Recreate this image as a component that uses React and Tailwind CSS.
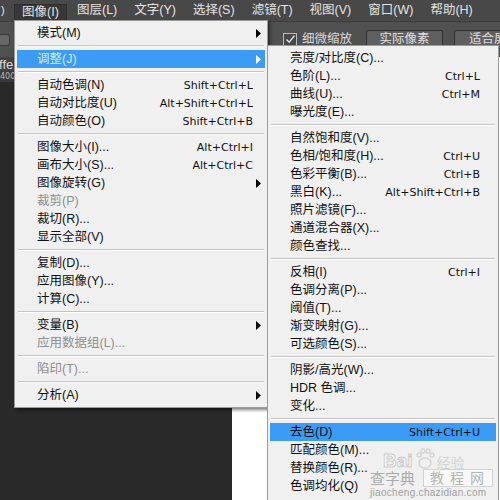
import React from 'react'

const UI = "font-['Liberation_Sans','Noto_Sans_CJK_SC',sans-serif]"

const MENUBAR = ['图层(L)', '文字(Y)', '选择(S)', '滤镜(T)', '视图(V)', '窗口(W)', '帮助(H)']

const IMAGE_MENU = [
  { label: '模式(M)', arrow: true },
  { sep: true },
  { label: '调整(J)', arrow: true, active: true },
  { sep: true },
  { label: '自动色调(N)', key: 'Shift+Ctrl+L' },
  { label: '自动对比度(U)', key: 'Alt+Shift+Ctrl+L' },
  { label: '自动颜色(O)', key: 'Shift+Ctrl+B' },
  { sep: true },
  { label: '图像大小(I)...', key: 'Alt+Ctrl+I' },
  { label: '画布大小(S)...', key: 'Alt+Ctrl+C' },
  { label: '图像旋转(G)', arrow: true },
  { label: '裁剪(P)', off: true },
  { label: '裁切(R)...' },
  { label: '显示全部(V)' },
  { sep: true },
  { label: '复制(D)...' },
  { label: '应用图像(Y)...' },
  { label: '计算(C)...' },
  { sep: true },
  { label: '变量(B)', arrow: true },
  { label: '应用数据组(L)...', off: true },
  { sep: true },
  { label: '陷印(T)...', off: true },
  { sep: true },
  { label: '分析(A)', arrow: true },
]

const ADJUST_MENU = [
  { label: '亮度/对比度(C)...' },
  { label: '色阶(L)...', key: 'Ctrl+L' },
  { label: '曲线(U)...', key: 'Ctrl+M' },
  { label: '曝光度(E)...' },
  { sep: true },
  { label: '自然饱和度(V)...' },
  { label: '色相/饱和度(H)...', key: 'Ctrl+U' },
  { label: '色彩平衡(B)...', key: 'Ctrl+B' },
  { label: '黑白(K)...', key: 'Alt+Shift+Ctrl+B' },
  { label: '照片滤镜(F)...' },
  { label: '通道混合器(X)...' },
  { label: '颜色查找...' },
  { sep: true },
  { label: '反相(I)', key: 'Ctrl+I' },
  { label: '色调分离(P)...' },
  { label: '阈值(T)...' },
  { label: '渐变映射(G)...' },
  { label: '可选颜色(S)...' },
  { sep: true },
  { label: '阴影/高光(W)...' },
  { label: 'HDR 色调...' },
  { label: '变化...' },
  { sep: true },
  { label: '去色(D)', key: 'Shift+Ctrl+U', active: true, darkText: true },
  { label: '匹配颜色(M)...' },
  { label: '替换颜色(R)...' },
  { label: '色调均化(Q)' },
]

function Arrow() {
  return (
    <svg width="5" height="9" viewBox="0 0 5 9">
      <path d="M0 0 L5 4.5 L0 9 Z" fill="currentColor" />
    </svg>
  )
}

function MenuRows({ items, keyPad }) {
  return items.map((it, i) => {
    if (it.sep) {
      return (
        <div key={i} className="h-[8px] flex items-center mx-[3px]">
          <div className="w-full h-[2px] border-t border-[#c4c4c4] border-b border-b-white" />
        </div>
      )
    }
    let color = 'text-[#111]'
    if (it.off) color = 'text-[#8e8e8e]'
    if (it.active && !it.darkText) color = 'text-[#d8e9fb]'
    return (
      <div
        key={i}
        className={`h-[18px] mx-[2px] flex items-center justify-between pl-[20px] ${it.arrow ? 'pr-[4px]' : keyPad} ${it.active ? 'bg-[#3c9bf4]' : ''} ${color}`}
      >
        <span className="text-[12.5px] leading-none">{it.label}</span>
        {it.key && <span className="font-['DejaVu_Sans',sans-serif] text-[11px] leading-none">{it.key}</span>}
        {it.arrow && <span className={it.active ? 'text-white' : 'text-black'}><Arrow /></span>}
      </div>
    )
  })
}

export default function App() {
  return (
    <div className={`relative w-[500px] h-[500px] overflow-hidden bg-[#282828] ${UI}`}>
      {/* menu bar */}
      <div className="h-[21px] bg-[#484848] flex items-center text-[12.5px] text-[#e4e4e4] leading-none whitespace-nowrap">
        <span className="w-[14px] pl-[1px] text-[11px]">)</span>
        <div className="h-[17px] mt-[3px] w-[53px] bg-[#383838] border border-[#2e2e2e] flex items-center pl-[7px]">图像(I)</div>
        <div className="flex ml-[10px] gap-[17px]">
          {MENUBAR.map((m) => (
            <span key={m}>{m}</span>
          ))}
        </div>
      </div>

      {/* options bar */}
      <div className="h-[36px] bg-[#505050] flex items-center border-t border-[#3e3e3e] whitespace-nowrap">
        <div className="w-[12px] h-[12px] shrink-0 ml-[-2px] rounded-[3px] bg-[#666] border border-[#3a3a3a]" />
        <div className="ml-[273px] shrink-0 flex items-center gap-[5px]">
          <div className="w-[14px] h-[14px] border border-[#bdbdbd] bg-[#474747] flex items-center justify-center">
            <svg width="11" height="11" viewBox="0 0 11 11">
              <path d="M1.5 5.5 L4.2 8.3 L9.5 1.5" stroke="#e0e0e0" strokeWidth="1.4" fill="none" />
            </svg>
          </div>
          <span className="text-[12.5px] text-[#dcdcdc]">细微缩放</span>
        </div>
        <div className="ml-[14px] shrink-0 h-[19px] w-[77px] bg-[#5f5f5f] border border-[#2f2f2f] rounded-[2px] text-[12.5px] text-[#e0e0e0] flex items-center justify-center">实际像素</div>
        <div className="ml-[11px] shrink-0 h-[19px] w-[70px] bg-[#5f5f5f] border border-[#2f2f2f] rounded-[2px] text-[12.5px] text-[#e0e0e0] flex items-center pl-[14px]">适合屏幕</div>
      </div>

      {/* workspace */}
      <div className="flex h-[443px]">
        <div className="w-[232px] flex flex-col">
          <div className="h-[14px] bg-[#424242] flex items-center">
            <span className="text-[13px] text-[#d8d8d8] ml-[-1px] leading-none">ffe</span>
          </div>
          <div className="h-[11px] bg-[#3a3a3a] flex items-center">
            <span className="font-['DejaVu_Sans',sans-serif] text-[8px] text-[#bbb] leading-none">400</span>
          </div>
          <div className="flex-1 bg-[#292929]" />
        </div>
        <div className="flex-1 bg-white" />
      </div>

      {/* image menu */}
      <div className="absolute left-[14px] top-[20px] w-[254px] bg-[#f0f0f0] border border-[#9a9a9a] py-[3px] shadow-[2px_2px_3px_rgba(0,0,0,0.5)]">
        <MenuRows items={IMAGE_MENU} keyPad="pr-[12px]" />
      </div>

      {/* adjustments submenu */}
      <div className="absolute left-[267px] top-[45px] w-[232px] h-[470px] bg-[#f0f0f0] border border-[#9a9a9a] pt-[3px]">
        <MenuRows items={ADJUST_MENU} keyPad="pr-[16px]" />
      </div>

      {/* watermark */}
      <div className="absolute left-[383px] top-[448px] flex items-end gap-[2px] opacity-70 pointer-events-none whitespace-nowrap">
        <span className="text-[19px] font-bold text-white [-webkit-text-stroke:1px_#bbb] leading-none">Bai</span>
        <svg width="20" height="22" viewBox="0 0 20 22">
          <ellipse cx="10" cy="15" rx="6" ry="5" fill="none" stroke="#c8c8c8" strokeWidth="1.5" />
          <circle cx="4" cy="7" r="2" fill="none" stroke="#c8c8c8" strokeWidth="1.3" />
          <circle cx="8" cy="3" r="2" fill="none" stroke="#c8c8c8" strokeWidth="1.3" />
          <circle cx="13" cy="3" r="2" fill="none" stroke="#c8c8c8" strokeWidth="1.3" />
          <circle cx="17" cy="7" r="2" fill="none" stroke="#c8c8c8" strokeWidth="1.3" />
        </svg>
        <span className="text-[14px] text-[#c8c8c8] leading-none">经验</span>
      </div>
      <div className="absolute left-[370px] top-[469px] flex items-center gap-[8px] opacity-80 pointer-events-none whitespace-nowrap">
        <span className="text-[15px] text-[#9a9a9a] leading-none">查字典</span>
        <span className="text-[14px] text-[#a8a8a8] leading-none tracking-[6px] bg-white/70 border border-[#ccc] pl-[6px] pr-[2px] py-[1px]">教程网</span>
      </div>
      <div className="absolute left-[370px] top-[488px] text-[10px] text-[#a0a0a0] leading-none tracking-[0.3px] pointer-events-none whitespace-nowrap">
        jiaocheng.chazidian.com
      </div>
    </div>
  )
}
